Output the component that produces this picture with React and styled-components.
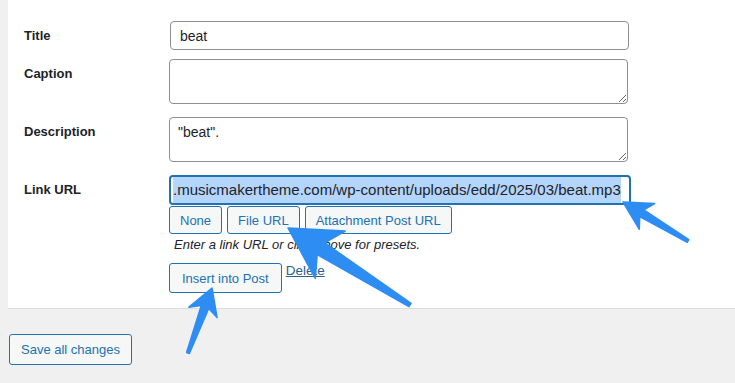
import React from 'react';
import styled, { createGlobalStyle } from 'styled-components';

const GlobalStyle = createGlobalStyle`
    body{
        margin:0;
        background:#f0f0f1;
        font-family:"Liberation Sans", Arial, sans-serif;
        color:#1d2327;
    }
`

// builds a hand-drawn looking arrow polygon from tip to tail
function arrowPoints(tip, tail, headLen, headHalf, neckHalf, tailHalf) {
    const dx = tail[0] - tip[0];
    const dy = tail[1] - tip[1];
    const len = Math.hypot(dx, dy);
    const ux = dx / len, uy = dy / len;
    const px = -uy, py = ux;
    const at = (d, w) => [tip[0] + ux * d + px * w, tip[1] + uy * d + py * w];
    const pts = [
        tip,
        at(headLen, headHalf),
        at(headLen * 0.78, neckHalf),
        at(len, tailHalf),
        at(len, -tailHalf),
        at(headLen * 0.78, -neckHalf),
        at(headLen, -headHalf),
    ];
    return pts.map(p => p.map(v => v.toFixed(1)).join(',')).join(' ');
}

const arrows = [
    { tip: [623, 202], tail: [688, 241], head: 28, half: 15, neck: 4, end: 1.5 },
    { tip: [288, 228], tail: [410, 305], head: 50, half: 28, neck: 7, end: 2 },
    { tip: [212, 288], tail: [188, 353], head: 26, half: 15, neck: 4, end: 1.5 },
];

function App() {
    return (
        <Page>
            <GlobalStyle />
            <Panel>
                <Row>
                    <Label>Title</Label>
                    <TextInput defaultValue="beat" />
                </Row>
                <Row gap={9}>
                    <Label>Caption</Label>
                    <TextArea defaultValue="" />
                </Row>
                <Row gap={13}>
                    <Label>Description</Label>
                    <TextArea defaultValue={'"beat".'} />
                </Row>
                <Row gap={13}>
                    <Label>Link URL</Label>
                    <Field>
                        <UrlBox>
                            <Selected>.musicmakertheme.com/wp-content/uploads/edd/2025/03/beat.mp3</Selected>
                        </UrlBox>
                        <ButtonRow>
                            <Button>None</Button>
                            <Button>File URL</Button>
                            <Button>Attachment Post URL</Button>
                        </ButtonRow>
                        <Help>Enter a link URL or click above for presets.</Help>
                        <Actions>
                            <Button tall>Insert into Post</Button>
                            <DeleteLink href="#">Delete</DeleteLink>
                        </Actions>
                    </Field>
                </Row>
            </Panel>
            <SaveButton>Save all changes</SaveButton>
            <Overlay width="735" height="383" viewBox="0 0 735 383">
                {arrows.map((a, i) => (
                    <polygon
                        key={i}
                        points={arrowPoints(a.tip, a.tail, a.head, a.half, a.neck, a.end)}
                        fill="#2e8df3"
                        stroke="#2e8df3"
                        strokeWidth="1.5"
                        strokeLinejoin="round"
                    />
                ))}
            </Overlay>
        </Page>
    )
}

export default App;

const Page = styled.div`
    position:relative;
    width:735px;
    height:383px;
    overflow:hidden;
    padding-left:8px;
    box-sizing:border-box;
`

const Panel = styled.div`
    background:#fff;
    border-bottom:1px solid #dcdcde;
    padding:21px 0 15px 16px;
`

const Row = styled.div`
    display:flex;
    align-items:flex-start;
    margin-top:${props => props.gap || 0}px;
`

const Label = styled.div`
    width:145px;
    flex-shrink:0;
    padding-top:7px;
    font-size:13px;
    line-height:16px;
    font-weight:600;
    color:#1d2327;
`

const TextInput = styled.input`
    box-sizing:border-box;
    width:459px;
    height:29px;
    margin-left:1px;
    padding:0 9px;
    border:1px solid #8c8f94;
    border-radius:4px;
    font-family:inherit;
    font-size:14px;
    color:#1d2327;
    outline:none;
`

const TextArea = styled.textarea`
    box-sizing:border-box;
    width:459px;
    height:45px;
    padding:5px 8px;
    border:1px solid #8c8f94;
    border-radius:4px;
    font-family:inherit;
    font-size:14px;
    line-height:18px;
    color:#1d2327;
    outline:none;
    resize:vertical;
`

const Field = styled.div`
    display:flex;
    flex-direction:column;
    align-items:flex-start;
`

const UrlBox = styled.div`
    box-sizing:border-box;
    width:462px;
    height:30px;
    border:2px solid #2271b1;
    border-radius:4px;
    padding:0 0 0 2px;
    display:flex;
    align-items:center;
    overflow:hidden;
    white-space:nowrap;
    font-size:15px;
    color:#1d2327;
`

const Selected = styled.span`
    background:#b4d5fe;
    line-height:26px;
`

const ButtonRow = styled.div`
    display:flex;
    gap:5px;
    margin-top:1px;
`

const Button = styled.button`
    box-sizing:border-box;
    height:${props => props.tall ? 30 : 28}px;
    padding:0 ${props => props.tall ? 12 : 10}px;
    border:1px solid #2271b1;
    border-radius:3px;
    background:#f6f7f7;
    color:#2271b1;
    font-family:inherit;
    font-size:13px;
    cursor:pointer;
`

const Help = styled.p`
    margin:3px 0 0 5px;
    font-size:13px;
    line-height:16px;
    font-style:italic;
    color:#1d2327;
`

const Actions = styled.div`
    display:flex;
    align-items:flex-start;
    gap:4px;
    margin-top:10px;
`

const DeleteLink = styled.a`
    font-size:13.5px;
    line-height:16px;
    color:#2c5f8a;
    margin-top:0;
`

const SaveButton = styled.button`
    display:block;
    box-sizing:border-box;
    margin:25px 0 0 1px;
    height:31px;
    padding:0 11px;
    border:1px solid #2271b1;
    border-radius:3px;
    background:#f6f7f7;
    color:#2271b1;
    font-family:inherit;
    font-size:13px;
`

const Overlay = styled.svg`
    position:absolute;
    top:0;
    left:0;
    pointer-events:none;
`
